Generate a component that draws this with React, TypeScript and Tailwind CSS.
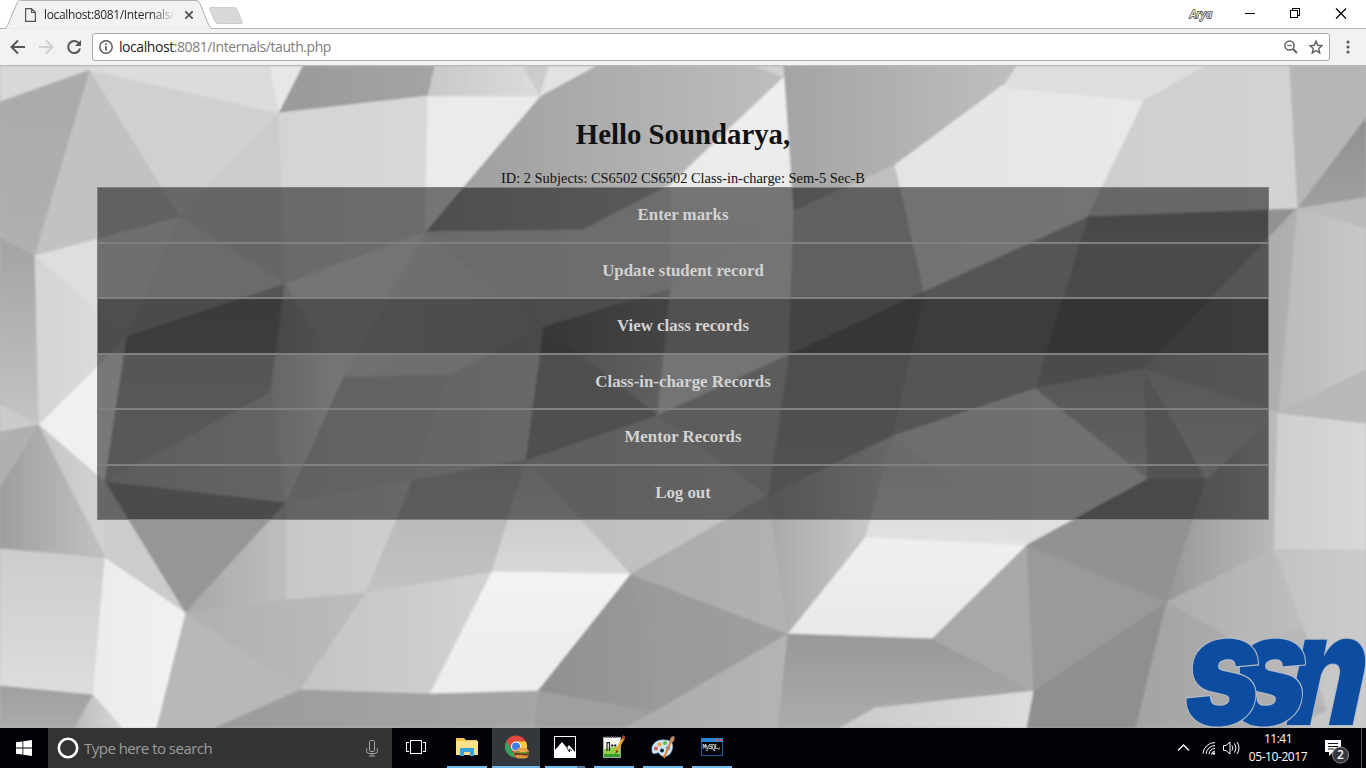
import React from "react";

type Face = { p: string; c: string; to?: string; dir?: "h" | "v" };

const FACES: Face[] = [
  { p: "0,66 92,66 90,70 0,102", c: "#d8d8d8" },
  { p: "0,102 90,70 35,256 0,238", c: "#aaaaaa", to: "#b0b0b0", dir: "v" },
  { p: "0,238 35,256 39,425 0,405", c: "#a3a3a3", to: "#c4c4c4", dir: "v" },
  { p: "90,70 180,217 35,256", c: "#c2c2c2" },
  { p: "35,256 180,217 127,337", c: "#dedede" },
  { p: "35,256 127,337 39,425", c: "#d4d4d4", to: "#dedede", dir: "h" },
  { p: "39,425 127,337 105,482", c: "#f0f0f0" },
  { p: "90,70 279,113 180,217", c: "#d0d0d0" },
  { p: "90,70 92,66 270,66 279,113", c: "#dcdcdc" },
  { p: "270,66 303,66 279,113", c: "#e7e7e7" },
  { p: "303,66 435,66 428,96 279,113", c: "#9a9a9a", to: "#a4a4a4", dir: "h" },
  { p: "279,113 180,217 285,284", c: "#cccccc" },
  { p: "279,113 428,96 425,232 285,284", c: "#d4d4d4", to: "#d8d8d8", dir: "h" },
  { p: "180,217 285,284 127,337", c: "#d6d6d6" },
  { p: "127,337 285,284 271,392 105,482", c: "#a9a9a9", to: "#b2b2b2", dir: "v" },
  { p: "105,482 271,392 286,503", c: "#bababa", to: "#c8c8c8", dir: "h" },
  { p: "285,284 425,232 344,377", c: "#e9e9e9" },
  { p: "271,392 285,284 344,377 286,503", c: "#cccccc", to: "#eeeeee", dir: "h" },
  { p: "425,232 344,377 450,375 544,326", c: "#e2e2e2", to: "#d8d8d8", dir: "h" },
  { p: "344,377 450,375 413,480 286,503", c: "#c2c2c2", to: "#c8c8c8", dir: "h" },
  { p: "286,503 413,480 366,593 286,600", c: "#c8c8c8", to: "#cfcfcf", dir: "h" },
  { p: "450,375 544,326 526,460 413,480", c: "#cbcbcb", to: "#d0d0d0", dir: "h" },
  { p: "286,503 185,613 105,482", c: "#969696" },
  { p: "286,503 185,613 286,600", c: "#a8a8a8", to: "#bebebe", dir: "h" },
  { p: "185,613 286,600 366,593 300,690", c: "#b0b0b0", to: "#bcbcbc", dir: "h" },
  { p: "185,613 300,690 215,728 156,728", c: "#b8b8b8" },
  { p: "0,405 39,425 0,432", c: "#cbcbcb" },
  { p: "0,432 39,425 0,488", c: "#b0b0b0" },
  { p: "0,488 39,425 105,555 0,549", c: "#9e9e9e", to: "#c2c2c2", dir: "h" },
  { p: "39,425 105,482 105,555", c: "#c6c6c6", to: "#d2d2d2", dir: "h" },
  { p: "105,482 185,613 105,560", c: "#cccccc" },
  { p: "0,549 105,558 93,695 0,686", c: "#cccccc", to: "#dddddd", dir: "v" },
  { p: "105,558 185,613 156,728 122,728 93,695", c: "#ebebeb", to: "#f2f2f2", dir: "h" },
  { p: "93,695 0,686 0,728 75,728", c: "#a0a0a0", to: "#acacac", dir: "v" },
  { p: "93,695 75,728 122,728", c: "#bcbcbc", to: "#d8d8d8", dir: "h" },
  { p: "413,480 526,460 492,572 366,593", c: "#b4b4b4", to: "#c2c2c2", dir: "v" },
  { p: "366,593 492,572 430,694 300,690", c: "#c4c4c4", to: "#d2d2d2", dir: "h" },
  { p: "526,460 631,574 492,572", c: "#c2c2c2", to: "#d8d8d8", dir: "v" },
  { p: "526,460 657,413 768,495 631,574", c: "#bcbcbc", to: "#c6c6c6", dir: "h" },
  { p: "492,572 631,574 538,691 430,694", c: "#f3f3f3", to: "#ececec", dir: "v" },
  { p: "300,690 430,694 538,691 538,728 215,728", c: "#9c9c9c", to: "#a6a6a6", dir: "h" },
  { p: "631,574 650,640 654,712 538,691", c: "#909090", to: "#999999", dir: "h" },
  { p: "631,574 788,634 654,712 650,640", c: "#999999", to: "#9f9f9f", dir: "h" },
  { p: "538,691 654,712 625,728 535,728", c: "#9f9f9f" },
  { p: "654,712 788,634 778,728 625,728", c: "#acacac", to: "#b4b4b4", dir: "h" },
  { p: "631,574 768,495 788,634", c: "#aaaaaa", to: "#b2b2b2", dir: "h" },
  { p: "768,495 893,435 866,537 788,634", c: "#a8a8a8", to: "#cfcfcf", dir: "h" },
  { p: "866,537 1027,545 932,639 788,634", c: "#f0f0f0", to: "#e8e8e8", dir: "v" },
  { p: "893,435 1027,545 866,537", c: "#d2d2d2", to: "#e2e2e2", dir: "v" },
  { p: "893,435 1035,388 1148,479 1027,545", c: "#dcdcdc", to: "#e3e3e3", dir: "h" },
  { p: "788,634 932,639 1034,691 875,710 840,728 778,728", c: "#989898", to: "#acacac", dir: "v" },
  { p: "840,728 875,708 1034,691 1027,728", c: "#cacaca", to: "#dcdcdc", dir: "h" },
  { p: "1027,545 932,639 1034,691", c: "#a8a8a8" },
  { p: "1027,545 1034,691 1167,602", c: "#9a9a9a" },
  { p: "1027,545 1148,479 1206,479 1167,602", c: "#929292" },
  { p: "1206,479 1278,413 1274,549 1167,602", c: "#989898", to: "#bababa", dir: "h" },
  { p: "1167,602 1034,691 1027,728 1136,728", c: "#8f8f8f" },
  { p: "1167,602 1274,549 1305,630 1225,637", c: "#adadad", to: "#bebebe", dir: "h" },
  { p: "1167,602 1305,682 1327,711 1290,718 1290,728 1136,728", c: "#a4a4a4", to: "#b2b2b2", dir: "h" },
  { p: "1225,637 1305,630 1327,711", c: "#b8b8b8" },
  { p: "1274,549 1366,549 1366,728 1290,728 1327,711 1305,630", c: "#c2c2c2", to: "#cccccc", dir: "h" },
  { p: "1278,413 1366,423 1366,549 1274,549", c: "#cecece", to: "#d8d8d8", dir: "h" },
  { p: "1297,208 1366,225 1366,370 1278,413", c: "#bababa", to: "#c8c8c8", dir: "h" },
  { p: "1278,413 1366,370 1366,423", c: "#b8b8b8" },
  { p: "1297,208 1366,197 1366,228", c: "#bbbbbb" },
  { p: "1297,208 1366,117 1366,197", c: "#909090", to: "#a0a0a0", dir: "v" },
  { p: "1289,66 1366,66 1366,117 1297,208", c: "#b6b6b6" },
  { p: "1088,216 1297,208 1144,369 1035,388", c: "#919191", to: "#989898", dir: "v" },
  { p: "1297,208 1278,413 1144,369", c: "#a3a3a3", to: "#b0b0b0", dir: "h" },
  { p: "1035,388 1144,369 1148,479", c: "#acacac", to: "#c6c6c6", dir: "v" },
  { p: "1144,369 1148,479 1206,479", c: "#a6a6a6" },
  { p: "1144,369 1206,479 1278,413", c: "#b2b2b2", to: "#c4c4c4", dir: "v" },
  { p: "1088,216 924,291 893,435 1035,388", c: "#ababab" },
  { p: "789,354 924,291 893,435 768,495", c: "#999999", to: "#a2a2a2", dir: "v" },
  { p: "657,415 789,354 768,495", c: "#b8b8b8" },
  { p: "670,288 794,211 789,354 657,415", c: "#e8e8e8" },
  { p: "544,326 670,288 657,415", c: "#9e9e9e", to: "#c2c2c2", dir: "h" },
  { p: "544,326 657,415 526,460", c: "#9e9e9e" },
  { p: "794,211 924,291 789,354", c: "#c0c0c0" },
  { p: "540,96 595,66 755,66 784,77 670,185 583,230 425,232", c: "#9c9c9c", to: "#bebebe", dir: "h" },
  { p: "755,66 784,66 784,77", c: "#d0d0d0" },
  { p: "428,96 540,96 425,232", c: "#ebebeb" },
  { p: "435,66 523,66 540,96 428,96", c: "#c8c8c8", to: "#dcdcdc", dir: "h" },
  { p: "523,66 549,66 540,96", c: "#cccccc" },
  { p: "549,66 595,66 540,96", c: "#e2e2e2" },
  { p: "784,77 794,211 670,288 670,185", c: "#f0f0f0", to: "#e4e4e4", dir: "v" },
  { p: "425,232 583,230 670,185 670,288 544,326", c: "#d6d6d6", to: "#dcdcdc", dir: "h" },
  { p: "784,66 1017,66 1003,85 895,165 794,211", c: "#a4a4a4", to: "#bfbfbf", dir: "h" },
  { p: "794,211 895,165 924,291", c: "#c0c0c0" },
  { p: "895,165 1003,85 1144,101 1088,216 924,291", c: "#e4e4e4", to: "#e9e9e9", dir: "h" },
  { p: "1017,66 1205,66 1144,101 1003,87", c: "#dedede" },
  { p: "1144,101 1205,66 1289,66 1297,208 1088,216", c: "#cecece", to: "#d3d3d3", dir: "h" },
];

function Facets() {
  return (
    <svg
      className="absolute -top-1 -left-1 h-[670px] w-[1374px]"
      viewBox="-4 62 1374 670"
      aria-hidden="true"
    >
      <defs>
        <filter id="soft" x="0" y="0" width="1" height="1">
          <feGaussianBlur stdDeviation="0.9" />
        </filter>
        {FACES.map((f, i) =>
          f.to ? (
            <linearGradient
              key={i}
              id={`f${i}`}
              x1="0"
              y1="0"
              x2={f.dir === "h" ? "1" : "0"}
              y2={f.dir === "v" ? "1" : "0"}
            >
              <stop offset="0" stopColor={f.c} />
              <stop offset="1" stopColor={f.to} />
            </linearGradient>
          ) : null
        )}
      </defs>
      <g filter="url(#soft)">
        <rect x="-4" y="62" width="1374" height="670" fill="#b8b8b8" />
        {FACES.map((f, i) => {
          const paint = f.to ? `url(#f${i})` : f.c;
          return <polygon key={i} points={f.p} fill={paint} stroke={paint} strokeWidth="0.8" />;
        })}
      </g>
    </svg>
  );
}

function LogoLetter({ ch, x, w, skew = 0 }: { ch: string; x: number; w: number; skew?: number }) {
  return (
    <text
      transform={`translate(${x} 89) skewX(${skew}) scale(${w} 1)`}
      fontFamily="Inter, 'Liberation Sans', sans-serif"
      fontWeight="900"
      fontStyle="italic"
      fontSize="156"
      stroke="#b4bac4"
      strokeWidth="2.500"
      paintOrder="stroke"
      fill="#0d4da1"
    >
      {ch}
    </text>
  );
}

function Logo() {
  return (
    <svg className="absolute right-0 bottom-0 h-[92px] w-[182px]" viewBox="0 0 182 92" role="img" aria-label="ssn">
      <LogoLetter ch="n" x={102} w={0.77} skew={-5} />
      <LogoLetter ch="s" x={47} w={0.82} skew={-2} />
      <LogoLetter ch="s" x={1} w={0.82} skew={-1} />
    </svg>
  );
}

function TabStrip() {
  return (
    <div className="relative flex h-[29px] items-start bg-white">
      <svg className="absolute inset-0 h-full w-full" width="1366" height="29">
        <path d="M0 28.5H1366" stroke="#b3b3b3" />
        <path d="M0 28.5H4.5Q6.5 28 7.5 25.5L17.5 2Q18.500 .5 20.500 .5H196Q198.500 .5 199.500 2.500L209 25.5Q210 28.500 212 28.500" fill="#f2f2f2" stroke="#b0b0b0" />
        <path d="M6 29H211" stroke="#f2f2f2" strokeWidth="1.400" />
        <path d="M211 7.500H234Q236 7.500 237 9.500L242 21.500Q243 23.500 241 23.500H218Q216 23.500 215 21.500L209.500 9Q209 7.500 211 7.500Z" fill="#d8d8d8" stroke="#cccccc" />
      </svg>
      <div className="relative flex h-[29px] w-[211px] items-center pl-[25px]">
        <svg width="11" height="14" viewBox="0 0 11 14" fill="none" stroke="#555" strokeWidth="1.200">
          <path d="M.6 .6H6.500L10.400 4.500V13.400H.6ZM6.500 .6V4.500H10.400" />
        </svg>
        <span className="ml-2 w-[134px] overflow-hidden bg-gradient-to-r from-[#222] from-80% to-transparent to-98% bg-clip-text font-['Open_Sans',sans-serif] text-[12px] leading-4 tracking-[-0.36px] whitespace-nowrap text-transparent">
          localhost:8081/Internals/t
        </span>
        <svg className="ml-[7px]" width="8" height="8" viewBox="0 0 8 8" stroke="#505050" strokeWidth="1.700">
          <path d="M.3 .3L7.700 7.700M7.700 .3L.3 7.700" />
        </svg>
      </div>
      <div className="relative ml-auto flex h-[28px] items-center">
        <svg className="mr-[29px]" width="28" height="16">
          <text x="2" y="12" fontFamily="'Open Sans', sans-serif" fontSize="10.500" fontStyle="italic" stroke="#444" strokeWidth="1.500" fill="#fff" paintOrder="stroke" textLength="22">Arya</text>
        </svg>
        <svg width="121" height="28" viewBox="1245 0 121 28" fill="none" stroke="#000" shapeRendering="crispEdges">
          <path d="M1245 13.500H1255" />
          <rect x="1290.500" y="10.500" width="7" height="7" />
          <path d="M1292.500 10V8.500H1299.500V15.500H1298" />
          <path d="M1336 8.500L1346 18.500M1346 8.500L1336 18.500" strokeWidth="1.200" shapeRendering="auto" />
        </svg>
      </div>
    </div>
  );
}

function Toolbar() {
  return (
    <div className="flex h-[37px] items-center border-b border-[#b6b8b6] bg-[#f2f2f2] pr-[16px] pl-[10px]">
      <svg width="76" height="20" viewBox="10 37 76 20" fill="none" strokeWidth="2">
        <path d="M25 47H12M18 40.500L11.500 47L18 53.500" stroke="#555" />
        <path d="M39 47H52M46 40.500L52.500 47L46 53.500" stroke="#d0d0d0" />
        <path d="M79 43.500A6 6 0 1 0 80 48.500" stroke="#555" />
        <path d="M81 40V46H75Z" fill="#555" />
      </svg>
      <div className="ml-[6px] flex h-[28px] w-[1238px] items-center rounded-[3px] border border-[#a9a9a9] bg-white pr-[6px] pl-[6px]">
        <svg width="14" height="14" viewBox="0 0 14 14" fill="none" stroke="#555">
          <circle cx="7" cy="7" r="6.200" strokeWidth="1.400" />
          <path d="M7 6V10.500M7 3.300V5" strokeWidth="1.700" />
        </svg>
        <span className="ml-[6px] font-['Open_Sans',sans-serif] text-[14px] leading-5 tracking-[-0.43px] text-[#7d7d7d]">
          <span className="text-[#1c1c1c]">localhost</span>:8081/Internals/tauth.php
        </span>
        <svg className="ml-auto" width="40" height="16" viewBox="0 0 40 16" fill="none" stroke="#606060">
          <circle cx="6.500" cy="6.500" r="4.600" strokeWidth="1.500" />
          <path d="M10 10L14 14" strokeWidth="2" />
          <path d="M4.300 6.500H8.700" strokeWidth="1.200" />
          <path d="M33 2.200L34.700 6.300L39 6.700L35.700 9.500L36.700 13.900L33 11.500L29.300 13.900L30.300 9.500L27 6.700L31.300 6.300Z" strokeWidth="1.400" />
        </svg>
      </div>
      <svg className="ml-auto" width="4" height="14" viewBox="0 0 4 14" fill="#5a5a5a">
        <circle cx="2" cy="2" r="1.600" />
        <circle cx="2" cy="7" r="1.600" />
        <circle cx="2" cy="12" r="1.600" />
      </svg>
    </div>
  );
}

const MENU = [
  { label: "Enter marks", cls: "h-[56px] pb-px bg-black/50" },
  { label: "Update student record", cls: "h-[55px] bg-black/50" },
  { label: "View class records", cls: "h-[56px] pb-px bg-black/65" },
  { label: "Class-in-charge Records", cls: "h-[55px] bg-black/50" },
  { label: "Mentor Records", cls: "h-[56px] pb-px bg-black/50" },
  { label: "Log out", cls: "h-[55px] bg-black/50" },
];

function PageBody() {
  return (
    <main className="relative h-[662px] overflow-hidden font-['Liberation_Serif',serif] text-[#111]">
      <Facets />
      <div className="relative mx-[97px] flex flex-col pt-[52px]">
        <h1 className="text-center text-[28.8px] leading-[33px] font-bold">Hello Soundarya,</h1>
        <p className="mt-[19px] h-[17px] text-center text-[14.4px] leading-[17px]">
          ID: 2 Subjects: CS6502 CS6502 Class-in-charge: Sem-5 Sec-B
        </p>
        <nav className="flex flex-col">
          {MENU.map((m) => (
            <a
              key={m.label}
              className={`flex items-center justify-center border border-[#808080] text-[16.85px] leading-[19px] font-bold text-[#d3d3d3] ${m.cls}`}
            >
              {m.label}
            </a>
          ))}
        </nav>
      </div>
      <Logo />
    </main>
  );
}

function TaskButton({ children, line, active }: { children: React.ReactNode; line?: "full" | "split"; active?: boolean }) {
  return (
    <div className={`mr-px flex h-10 w-12 flex-col items-center ${active ? "bg-[#34373b]" : ""}`}>
      <div className="flex h-[38px] items-center">{children}</div>
      {line === "full" && <div className={`h-[2px] bg-[#76b9ed] ${active ? "w-full" : "w-10"}`} />}
      {line === "split" && (
        <div className="flex h-[2px] w-10">
          <div className="w-8 bg-[#76b9ed]" />
          <div className="w-2 bg-[#4d7ba1]" />
        </div>
      )}
    </div>
  );
}

function Taskbar() {
  return (
    <footer className="flex h-10 items-stretch bg-[#010308] font-['Open_Sans',sans-serif] text-white">
      <div className="flex w-12 items-center justify-center">
        <svg width="16" height="16" viewBox="0 0 16 16" fill="#fff">
          <path d="M0 2.300L6.500 1.400V7.500H0ZM7.300 1.300L16 0V7.500H7.300ZM0 8.500H6.500V14.600L0 13.700ZM7.300 8.500H16V16L7.300 14.700Z" />
        </svg>
      </div>
      <div className="flex w-[344px] items-center bg-[#333] pr-[14px] pl-[9px]">
        <svg width="22" height="22" viewBox="0 0 22 22">
          <circle cx="11" cy="11" r="9.200" fill="none" stroke="#fff" strokeWidth="2.600" />
        </svg>
        <span className="ml-[5px] text-[15px] leading-5 tracking-[-0.52px] text-[#9c9c9c]">Type here to search</span>
        <svg className="ml-auto" width="12" height="17" viewBox="0 0 12 17" fill="none" stroke="#a6a6a6">
          <rect x="3.500" y=".5" width="5" height="11" rx="1" />
          <path d="M.7 8V11.500Q.7 13.500 3 13.500H9Q11.300 13.500 11.300 11.500V8M6 13.500V16M3 16H9" />
        </svg>
      </div>
      <div className="flex">
        <div className="mr-[2px]">
          <TaskButton>
            <svg width="20" height="16" viewBox="0 0 20 16" fill="none" stroke="#fff" shapeRendering="crispEdges">
              <rect x="4.500" y="1.500" width="11" height="13" />
              <path d="M3 3.500H.5V12.500H3M17 3.500H19.500V12.500H17" />
            </svg>
          </TaskButton>
        </div>
        <TaskButton line="full">
          <svg width="22" height="20" viewBox="0 0 22 20">
            <path d="M0 1H8L10 3H21V18H0Z" fill="#f5c64f" />
            <path d="M1 4H22V18H0V5Z" fill="#fde08c" />
            <path d="M4 19V11H18V19H14V15H8V19Z" fill="#38a3df" />
          </svg>
        </TaskButton>
        <TaskButton line="full" active>
          <svg className="ml-[2px]" width="26" height="24" viewBox="0 0 26 24">
            <circle cx="12" cy="11.500" r="11" fill="#e04a3f" />
            <path d="M2.500 6L8 15.500L11.500 22.500A11 11 0 0 1 2.500 6Z" fill="#2ca55d" />
            <path d="M12 6.500H21.800A11 11 0 0 1 12.500 22.500L16.500 14Z" fill="#f9cf3f" />
            <circle cx="12" cy="11.500" r="5" fill="#fff" />
            <circle cx="12" cy="11.500" r="4" fill="#3f80e8" />
            <path d="M12 16Q13 12 19 12.500Q25 13.500 25 17Z" fill="#e8a04c" />
            <path d="M11 16.500L25 17.500V19L11 18.500Z" fill="#68a536" />
            <path d="M11 18L25 18.800V20.500L11 20Z" fill="#7a2f1b" />
            <path d="M11.500 20L24.500 20.500Q24 23.500 20 23.500H14Q11.500 23 11.500 20Z" fill="#dc953f" />
          </svg>
        </TaskButton>
        <TaskButton line="split">
          <svg width="22" height="22" viewBox="0 0 22 22">
            <rect x=".5" y=".5" width="21" height="21" fill="#010308" stroke="#fff" />
            <path d="M1 14L8 6L13 12L15 9L21 16V21H1Z" fill="#fff" />
            <path d="M13 12L15.500 16V13L18 15" fill="none" stroke="#010308" strokeWidth=".8" />
          </svg>
        </TaskButton>
        <TaskButton line="full">
          <svg className="-ml-[2px]" width="24" height="24" viewBox="0 0 24 24">
            <path d="M2 2H20V23H2Z" fill="#f4f4ec" />
            <path d="M2 15Q10 11 20 12V23H2Z" fill="#8fd048" />
            <path d="M2 19H20V23H2Z" fill="#2f9d27" />
            <path d="M2.500 2.500H19.500V22.500H2.500Z" fill="none" stroke="#aaa" />
            <path d="M4 2H18" stroke="#555" strokeDasharray="1 1" strokeWidth="2" />
            <path d="M6 7V16M6 7.600H8.500V16M10 10.500H12.500M11.200 9.200V11.800M13 10.500H15.500M14.200 9.200V11.800" fill="none" stroke="#222" strokeWidth="1.200" />
            <path d="M23 2L15 17" stroke="#e8a11e" strokeWidth="2.600" />
            <path d="M15.500 15L14 19L17.500 16.500Z" fill="#664313" />
            <path d="M23.500 1L22 4" stroke="#c63d31" strokeWidth="3" />
          </svg>
        </TaskButton>
        <TaskButton line="full">
          <svg width="24" height="24" viewBox="0 0 24 24">
            <path d="M1 16C0 8 7 4 14 5C21 5 23 10 21 15C19 21 15 22 11 21C8 20 9 17 6 18C3 19 1 19 1 16Z" fill="#cfe4f4" stroke="#86b4d6" strokeWidth=".6" />
            <circle cx="5" cy="13.500" r="2" fill="#dc5a4a" />
            <circle cx="8.500" cy="9.500" r="2" fill="#f0a32f" />
            <circle cx="14" cy="8" r="2" fill="#68b84a" />
            <circle cx="17" cy="13" r="2" fill="#3b83cc" />
            <circle cx="11" cy="15.500" r="2" fill="#122238" />
            <path d="M20 6L13 23" stroke="#df8435" strokeWidth="2" />
            <path d="M19 7Q18 2 23 1Q25 5 21 8Z" fill="#b98d62" />
          </svg>
        </TaskButton>
        <TaskButton line="full">
          <svg width="22" height="20" viewBox="0 0 22 20">
            <rect x=".5" y="1.500" width="21" height="17" fill="#05070c" stroke="#255a9b" />
            <rect x="0" y="1" width="22" height="4" fill="#2f83d3" />
            <path d="M15 3H17M19 3H21" stroke="#e35d52" strokeWidth="2" />
            <text x="1.500" y="11.500" fill="#fff" fontFamily="'Liberation Mono', monospace" fontSize="6.500" textLength="19">MySQL,</text>
          </svg>
        </TaskButton>
      </div>
      <div className="ml-auto flex items-center">
        <svg width="64" height="20" viewBox="0 0 64 20" fill="none" stroke="#fff">
          <path d="M1 12.500L6.500 7L12 12.500" strokeWidth="1.300" />
          <path d="M26 15.500A12 12 0 0 1 38 4.500M29 16A9.500 9.500 0 0 1 38 7.500M32 16A6.500 6.500 0 0 1 38 10.500M34.500 16.500A4 4 0 0 1 38 13" strokeWidth="1" />
          <circle cx="36.800" cy="15.500" r="1.300" fill="#fff" stroke="none" />
          <path d="M46.500 7.500H49L53 4V16L49 12.500H46.500Z" />
          <path d="M55 7.500Q56.800 10 55 12.500M57.500 5.500Q60.500 10 57.500 14.500M60 4Q64 10 60 16" />
        </svg>
        <div className="ml-[7px] flex w-[60px] flex-col items-center text-[12px]">
          <span className="leading-[18px] tracking-[-0.5px]">11:41</span>
          <span className="leading-[18px] tracking-[-0.42px] whitespace-nowrap">05-10-2017</span>
        </div>
        <svg className="mr-[10px] ml-[17px]" width="26" height="32" viewBox="0 -2 26 32">
          <path d="M0 6H16V18H8L4 22V18H0Z" fill="#fff" />
          <path d="M3 9.500H13M3 12.500H13M3 15H9" stroke="#10141a" />
          <circle cx="15.500" cy="21" r="8" fill="#35373b" stroke="#8c8c8c" />
          <text x="15.500" y="25.300" textAnchor="middle" fill="#fff" fontFamily="'Open Sans', sans-serif" fontSize="12" fontWeight="600">2</text>
        </svg>
        <div className="mr-1 h-10 w-px bg-[#52565c]" />
      </div>
    </footer>
  );
}

export default function App() {
  return (
    <div className="flex h-[768px] w-[1366px] flex-col overflow-hidden">
      <TabStrip />
      <Toolbar />
      <PageBody />
      <Taskbar />
    </div>
  );
}
